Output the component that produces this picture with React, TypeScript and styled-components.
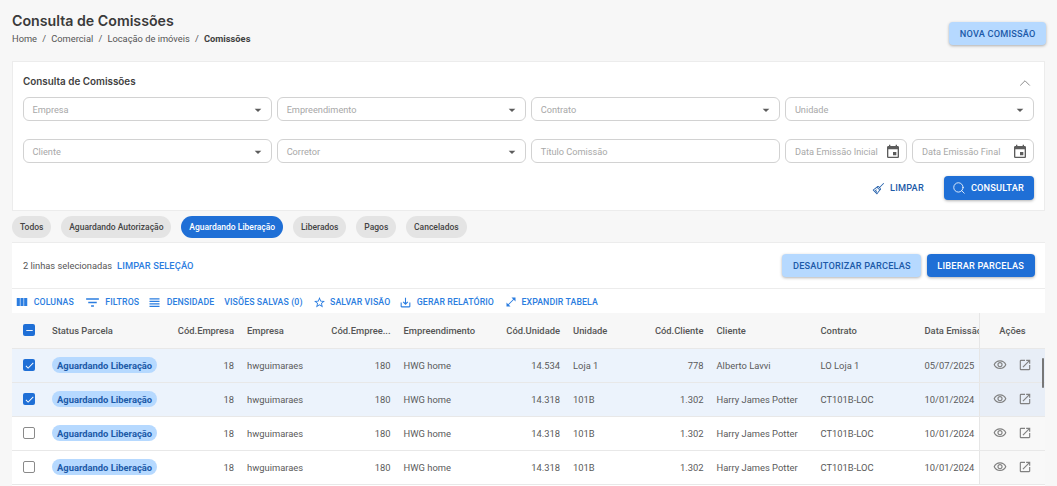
import React from "react";
import styled, { createGlobalStyle } from "styled-components";
import {
  MdArrowDropDown, MdEvent, MdViewColumn, MdFilterList,
  MdViewHeadline, MdStarBorder, MdOutlineSaveAlt, MdOpenInFull, MdOutlineVisibility, MdOpenInNew,
  MdCheck, MdRemove,
} from "react-icons/md";
import { LiaBroomSolid } from "react-icons/lia";
import { ChevronUp, Search } from "lucide-react";

const Global = createGlobalStyle`
  html, body { margin: 0; padding: 0; background: #f7f7f7; overflow: hidden; }
  body { font-family: Roboto, "Liberation Sans", sans-serif; color: #4a4a4a; }
  * { box-sizing: border-box; }
`;

const Page = styled.div`
  width: 1057px; height: 486px; overflow: hidden; padding: 0 12px;
  display: flex; flex-direction: column;
`;
const Header = styled.header`
  height: 61px; display: flex; justify-content: space-between; align-items: flex-start;
`;
const HeadText = styled.div`padding-top: 12px;`;
const Title = styled.h1`
  margin: 0; font: 600 14.2px/18px Inter, sans-serif; color: #3a3a3a;
`;
const Crumbs = styled.div`
  margin-top: 2px; font: 400 9.3px/14px Roboto, sans-serif; color: #555; display: flex; gap: 5.2px;
  b { font-weight: 700; color: #3f3f3f; }
`;
const Btn = styled.button<{ $v: "primary" | "soft" }>`
  border: 0; border-radius: 4px; height: 23.5px; padding: 0 10.5px; cursor: pointer;
  display: inline-flex; align-items: center; gap: 5px;
  font: 500 9.2px/1 Roboto, sans-serif; letter-spacing: 0.2px; text-transform: uppercase;
  background: ${(p) => (p.$v === "primary" ? "#1f6fd6" : "#b6d9ff")};
  color: ${(p) => (p.$v === "primary" ? "#fff" : "#1c5aa8")};
  box-shadow: 0 1px 3px rgba(0,0,0,.3);
`;
const NewBtn = styled(Btn)`margin-top: 21.5px; margin-right: -1px;`;
const SearchBtn = styled(Btn)`padding: 0 10px 0 8.5px; height: 24px; gap: 4.5px;`;
const FilterCard = styled.section`
  height: 150px; background: #fff; border: 1px solid #ececec; padding: 10px 10px 0;
  display: flex; flex-direction: column;
`;
const CardHead = styled.div`
  height: 25px; padding-bottom: 4px; display: flex; justify-content: space-between; align-items: center;
  color: #666;
`;
const CardTitle = styled.h2`margin: -2px 0 0; font: 600 9.9px/1 Inter, sans-serif; color: #3f3f3f;`;
const Fields = styled.div`
  display: grid; grid-template-columns: repeat(4, 1fr); column-gap: 5.5px; row-gap: 18px;
`;
const Dates = styled.div`display: grid; grid-template-columns: 1fr 1fr; gap: 5.5px;`;
const Field = styled.div`
  height: 24px; border: 1px solid #d2d2d2; border-radius: 6px; padding: 1px 5px 0 8.5px;
  display: flex; justify-content: space-between; align-items: center; min-width: 0;
  font: 400 9.2px/1 Roboto, sans-serif; color: #a8a8a8; white-space: nowrap;
  svg { color: #5c5c5c; flex: none; }
`;
const Actions = styled.div`
  margin-top: 13px; display: flex; justify-content: flex-end; align-items: center; gap: 20px;
`;
const Ghost = styled.button`
  border: 0; background: none; display: inline-flex; align-items: center; gap: 5px; padding: 0;
  font: 500 9.2px/1 Roboto, sans-serif; letter-spacing: .2px; color: #1c5aa8;
`;
const Chips = styled.nav`height: 31px; padding-top: 5px; display: flex; gap: 9.8px;`;
const Chip = styled.span<{ $on?: boolean }>`
  height: 21.5px; border-radius: 11px; padding: 0 8px; display: inline-flex; align-items: center;
  font: 500 8.5px/1 Roboto, sans-serif;
  background: ${(p) => (p.$on ? "#1f6fd6" : "#e4e4e4")};
  color: ${(p) => (p.$on ? "#fff" : "#444")};
`;
const TableCard = styled.section`flex: 1; background: #fff; border-top: 1px solid #ececec; min-height: 0;`;
const SelBar = styled.div`
  height: 46px; padding: 0 10.5px; display: flex; align-items: center; justify-content: space-between;
  border-bottom: 1px solid #ececec;
`;
const SelLeft = styled.div`display: flex; gap: 5px; align-items: center; font: 400 9.3px/1 Roboto, sans-serif; color: #555; padding-left: .5px;`;
const LinkText = styled.span`color: #2b7de0; font-weight: 500; letter-spacing: .1px;`;
const SelBtns = styled.div`display: flex; gap: 5.5px;`;
const Tools = styled.div`height: 24px; padding: 2px 0 0 3.25px; display: flex; align-items: center; gap: 10px;`;
const Tool = styled.span<{ $nudge?: number }>`
  display: inline-flex; align-items: center; gap: 4.5px; white-space: nowrap;
  margin-left: ${(p) => p.$nudge ?? 0}px;
  font: 500 8.75px/1 Roboto, sans-serif; color: #2b7de0; letter-spacing: .1px;
`;
const COLS = "33.5px 119.5px 75.5px 84.5px 72px 100px 69.5px 73.5px 70px 104px 104px 61px 66px";
const Row = styled.div<{ $sel?: boolean; $head?: boolean }>`
  display: grid; grid-template-columns: ${COLS}; align-items: stretch;
  height: ${(p) => (p.$head ? "35.5px" : "34px")};
  padding-top: ${(p) => (p.$head ? "0" : ".5px")};
  background: ${(p) => (p.$head ? "#f7f7f7" : p.$sel ? "#ecf3fc" : "#fff")};
  border-bottom: 1px solid #e8e8e8;
  font: ${(p) => (p.$head ? 500 : 400)} 9.4px/1 Roboto, sans-serif;
  color: ${(p) => (p.$head ? "#555" : "#5a5a5a")};
`;
const Cell = styled.div<{ $r?: boolean }>`
  display: flex; align-items: center; padding: 0 6.5px; overflow: hidden; white-space: nowrap; min-width: 0;
  justify-content: ${(p) => (p.$r ? "flex-end" : "flex-start")};
`;
const CheckCell = styled(Cell)`padding: 0 0 0 11px;`;
const Box = styled.span<{ $on?: boolean }>`
  width: 12px; height: 12px; border-radius: 2px; display: inline-flex; align-items: center; justify-content: center;
  background: ${(p) => (p.$on ? "#1f6fd6" : "#fff")}; color: #fff;
  border: ${(p) => (p.$on ? "0" : "1.5px solid #8a8a8a")};
`;
const Pill = styled.span`
  height: 16px; border-radius: 8px; padding: 0 5px; background: #b6d9ff; color: #1c5aa8;
  display: inline-flex; align-items: center; font: 700 9.4px/1 Roboto, sans-serif;
`;
const ActionCell = styled.div<{ $tint?: boolean; $head?: boolean }>`
  position: relative; display: flex; align-items: center; justify-content: center; gap: 11px;
  border-left: 1px solid #e6e6e6; color: ${(p) => (p.$head ? "#555" : "#808080")};
  background: ${(p) => (p.$head ? "#f7f7f7" : p.$tint ? "#e8eef7" : "#f8f8f8")};
`;
const Scroll = styled.span`
  position: absolute; z-index: 2; right: 1.5px; top: 9px; width: 2px; height: 30px; background: #777; border-radius: 1px;
`;

const rows = [
  ["14.534", "Loja 1", "778", "Alberto Lavvi", "LO Loja 1", "05/07/2025", true],
  ["14.318", "101B", "1.302", "Harry James Potter", "CT101B-LOC", "10/01/2024", true],
  ["14.318", "101B", "1.302", "Harry James Potter", "CT101B-LOC", "10/01/2024", false],
  ["14.318", "101B", "1.302", "Harry James Potter", "CT101B-LOC", "10/01/2024", false],
] as const;

export default function App() {
  return (
    <Page>
      <Global />
      <Header>
        <HeadText>
          <Title>Consulta de Comissões</Title>
          <Crumbs><span>Home</span><span>/</span><span>Comercial</span><span>/</span><span>Locação de imóveis</span><span>/</span><b>Comissões</b></Crumbs>
        </HeadText>
        <NewBtn $v="soft">Nova Comissão</NewBtn>
      </Header>
      <FilterCard>
        <CardHead><CardTitle>Consulta de Comissões</CardTitle><ChevronUp size={18} strokeWidth={1} /></CardHead>
        <Fields>
          {["Empresa", "Empreendimento", "Contrato", "Unidade", "Cliente", "Corretor"].map((l) => (
            <Field key={l}>{l}<MdArrowDropDown size={16} /></Field>
          ))}
          <Field>Título Comissão</Field>
          <Dates>
            <Field>Data Emissão Inicial<MdEvent size={16} /></Field>
            <Field>Data Emissão Final<MdEvent size={16} /></Field>
          </Dates>
        </Fields>
        <Actions>
          <Ghost><LiaBroomSolid size={13} />LIMPAR</Ghost>
          <SearchBtn $v="primary"><Search size={14} strokeWidth={1.4} />CONSULTAR</SearchBtn>
        </Actions>
      </FilterCard>
      <Chips>
        <Chip>Todos</Chip><Chip>Aguardando Autorização</Chip><Chip $on>Aguardando Liberação</Chip>
        <Chip>Liberados</Chip><Chip>Pagos</Chip><Chip>Cancelados</Chip>
      </Chips>
      <TableCard>
        <SelBar>
          <SelLeft>2 linhas selecionadas <LinkText>LIMPAR SELEÇÃO</LinkText></SelLeft>
          <SelBtns><Btn $v="soft">Desautorizar Parcelas</Btn><Btn $v="primary">Liberar Parcelas</Btn></SelBtns>
        </SelBar>
        <Tools>
          <Tool><MdViewColumn size={14} />COLUNAS</Tool>
          <Tool><MdFilterList size={17} />FILTROS</Tool>
          <Tool $nudge={-2}><MdViewHeadline size={15} />DENSIDADE</Tool>
          <Tool>VISÕES SALVAS (0)</Tool>
          <Tool><MdStarBorder size={13} />SALVAR VISÃO</Tool>
          <Tool $nudge={-1}><MdOutlineSaveAlt size={13} />GERAR RELATÓRIO</Tool>
          <Tool $nudge={1}><MdOpenInFull size={12} />EXPANDIR TABELA</Tool>
        </Tools>
        <Row $head>
          <CheckCell><Box $on><MdRemove size={11} /></Box></CheckCell>
          <Cell>Status Parcela</Cell><Cell $r>Cód.Empresa</Cell><Cell>Empresa</Cell><Cell $r>Cód.Empree...</Cell>
          <Cell>Empreendimento</Cell><Cell $r>Cód.Unidade</Cell><Cell>Unidade</Cell><Cell $r>Cód.Cliente</Cell>
          <Cell>Cliente</Cell><Cell>Contrato</Cell><Cell>Data Emissão</Cell>
          <ActionCell $head>Ações</ActionCell>
        </Row>
        {rows.map((r, i) => (
          <Row key={i} $sel={r[6]}>
            <CheckCell><Box $on={r[6]}>{r[6] && <MdCheck size={11} />}</Box></CheckCell>
            <Cell><Pill>Aguardando Liberação</Pill></Cell>
            <Cell $r>18</Cell><Cell>hwguimaraes</Cell><Cell $r>180</Cell><Cell>HWG home</Cell>
            <Cell $r>{r[0]}</Cell><Cell>{r[1]}</Cell><Cell $r>{r[2]}</Cell><Cell>{r[3]}</Cell><Cell>{r[4]}</Cell><Cell>{r[5]}</Cell>
            <ActionCell $tint={r[6]}>
              <MdOutlineVisibility size={14} /><MdOpenInNew size={14} />
              {i === 0 && <Scroll />}
            </ActionCell>
          </Row>
        ))}
      </TableCard>
    </Page>
  );
}
